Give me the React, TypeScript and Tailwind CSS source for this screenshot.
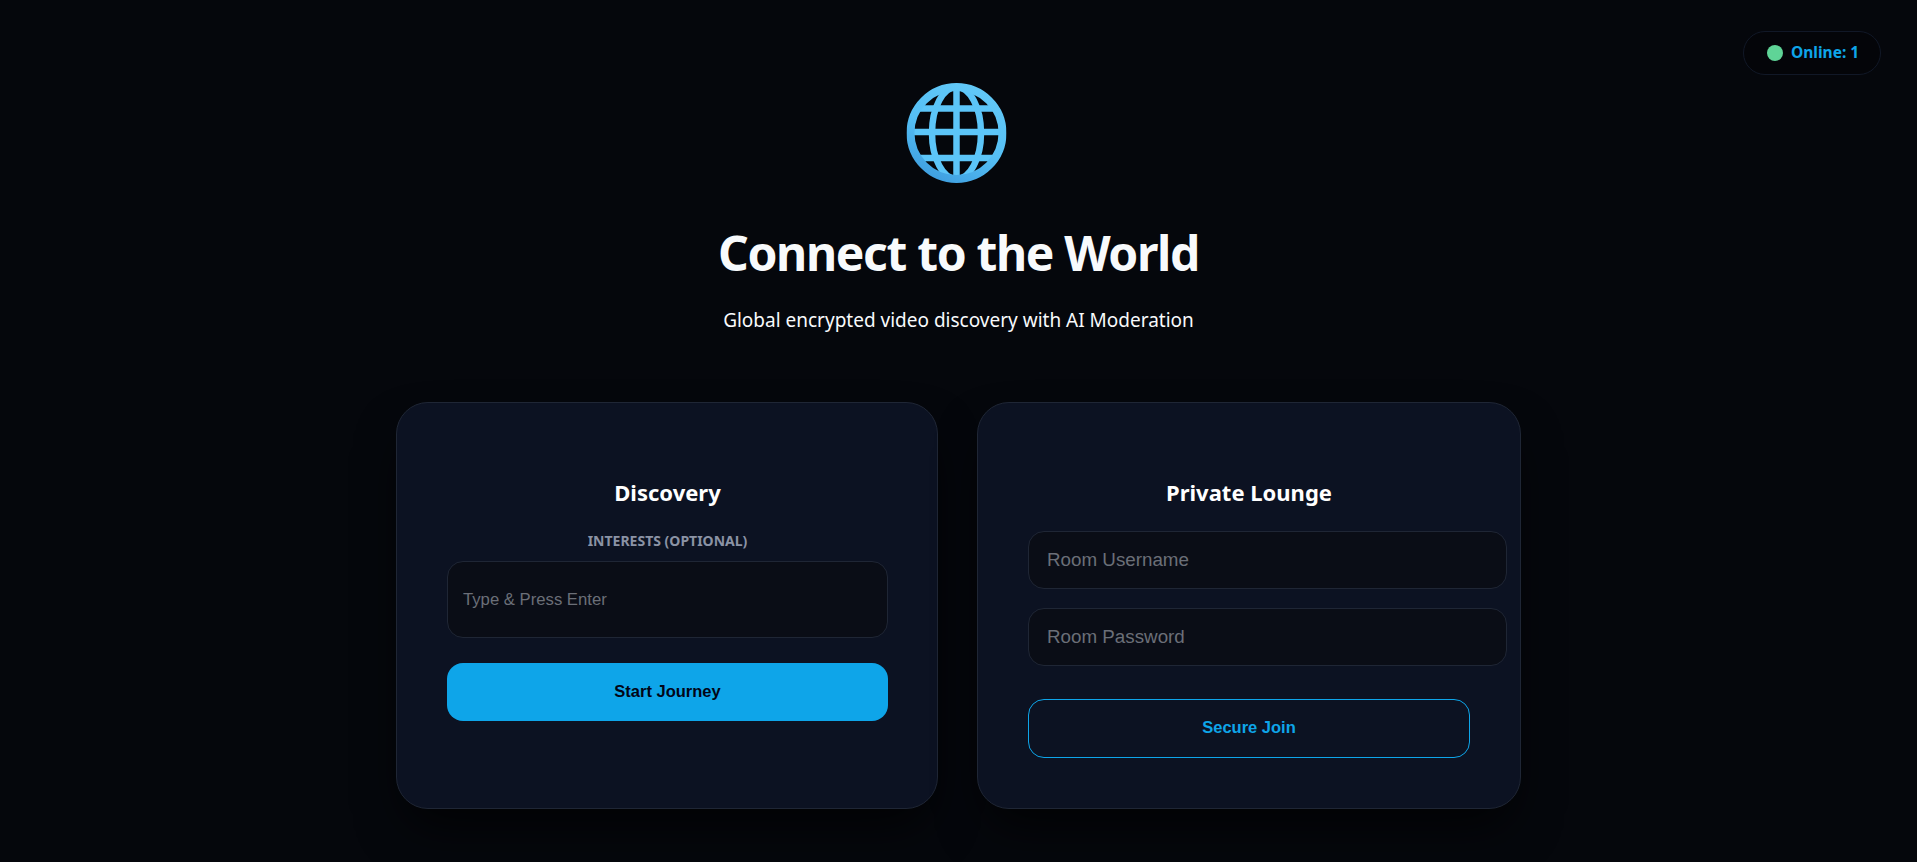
const SANS = "font-['Noto_Sans','Open_Sans',sans-serif]";

function Globe() {
  return (
    <svg viewBox="0 0 100 100" className="h-[100px] w-[100px]" fill="none">
      <defs>
        <linearGradient id="rim" x1="0.75" y1="0" x2="0.25" y2="1">
          <stop offset="0" stopColor="#62c8f7" />
          <stop offset="0.55" stopColor="#55bff5" />
          <stop offset="1" stopColor="#3f9fe0" />
        </linearGradient>
      </defs>
      <g stroke="#5cc5f8" strokeWidth="6.5">
        <path d="M50 4V96" />
        <ellipse cx="50" cy="50" rx="24.5" ry="46" />
        <path d="M4 49H96" />
        <path d="M11 25.5H89" />
        <path d="M11 75H89" />
      </g>
      <circle cx="50" cy="50" r="46" stroke="url(#rim)" strokeWidth="8" />
    </svg>
  );
}

export default function App() {
  return (
    <main className={`relative flex h-[862px] flex-col items-center overflow-hidden bg-[#05070c] text-white ${SANS}`}>
      <div className="absolute right-[36px] top-[31px] flex h-[44px] w-[138px] items-center gap-[8px] rounded-full border border-[#111827] bg-[#040509] pl-[23px]">
        <span className="h-4 w-4 rounded-full bg-[#5fd497]" />
        <span className="text-[15.5px] font-bold text-[#0ea5e9]">Online: 1</span>
      </div>

      <div className="mt-[83px] -translate-x-[2.5px]">
        <Globe />
      </div>
      <h1 className="mt-[32px] text-[48px] font-bold leading-[76px] tracking-[-1.35px] text-[#f8fafc]">Connect to the World</h1>
      <p className="mt-[15px] text-[19px] leading-[28px] text-[#f8fafc]">Global encrypted video discovery with AI Moderation</p>

      <div className="mt-[68px] grid w-[1125px] grid-cols-[542px_544px] gap-[39px]">
        <section className="h-[407px] rounded-[32px] border border-[#1f2635] bg-[#0c1222] pl-[50px] pr-[49px] pt-[71px] shadow-[0_25px_50px_-12px_rgba(0,0,0,0.8)]">
          <h2 className="text-center text-[22px] font-bold leading-[36px]">Discovery</h2>
          <label className="mt-[23px] block text-center text-[14px] font-bold leading-[16px] text-[#8b93a5]">INTERESTS (OPTIONAL)</label>
          <input
            placeholder="Type & Press Enter"
            className="mt-[12px] h-[77px] w-full rounded-2xl border border-[#1f2635] bg-[#0a0d16] px-[15px] font-['Liberation_Sans',sans-serif] text-[16.7px] outline-none placeholder:text-[#6b6f78]"
          />
          <button className="mt-[25px] h-[58px] w-full rounded-2xl bg-[#0ea5e9] pb-[2px] font-['Liberation_Sans',sans-serif] text-[16.5px] font-bold text-[#020617]">Start Journey</button>
        </section>

        <section className="h-[407px] rounded-[32px] border border-[#1f2635] bg-[#0c1222] px-[50px] pt-[71px] shadow-[0_25px_50px_-12px_rgba(0,0,0,0.8)]">
          <h2 className="text-center text-[22px] font-bold leading-[36px]">Private Lounge</h2>
          <div className="mt-[21px] flex w-[479px] flex-col gap-[19px]">
            <input
              placeholder="Room Username"
              className="h-[58px] w-full rounded-2xl border border-[#1f2635] bg-[#0a0d16] px-[18px] font-['Liberation_Sans',sans-serif] text-[18.8px] outline-none placeholder:text-[#6b6f78]"
            />
            <input
              placeholder="Room Password"
              className="h-[58px] w-full rounded-2xl border border-[#1f2635] bg-[#0a0d16] px-[18px] font-['Liberation_Sans',sans-serif] text-[18.8px] outline-none placeholder:text-[#6b6f78]"
            />
          </div>
          <button className="mt-[33px] h-[59px] w-[442px] rounded-2xl border border-[#0ea5e9] pb-[2px] font-['Liberation_Sans',sans-serif] text-[16.5px] font-bold text-[#0ea5e9]">Secure Join</button>
        </section>
      </div>
    </main>
  );
}
